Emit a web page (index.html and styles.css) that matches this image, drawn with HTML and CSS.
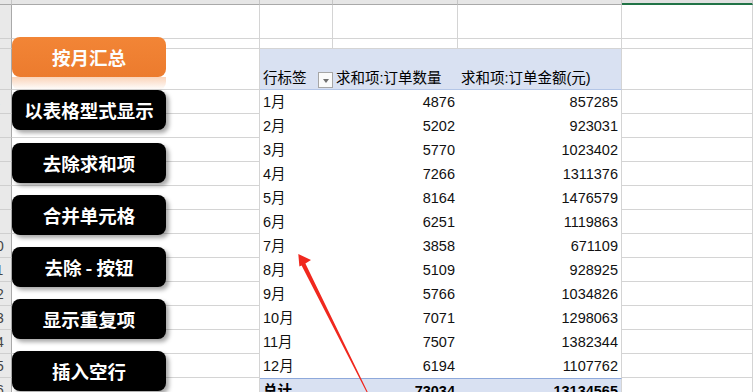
FILE: index.html
```html
<!DOCTYPE html>
<html>
<head>
<meta charset="utf-8">
<link rel="stylesheet" href="styles.css">
</head>
<body>
<div class="sheet">
  <div class="ch"></div><div class="ch"></div><div class="ch"></div><div class="ch"></div><div class="ch"></div><div class="ch sel"></div>

  <div class="rh"><span>1</span></div><div class="c"></div><div class="c"></div><div class="c"></div><div class="c"></div><div class="c"></div>
  <div class="rh"><span>2</span></div><div class="c"></div><div class="c"></div><div class="c"></div><div class="c"></div><div class="c"></div>
  <div class="rh"><span>3</span></div><div class="c"></div>
  <div class="c ph ph-first"><span class="cjk">行标签</span><span class="dd"><i></i></span></div>
  <div class="c ph ph-mid"><span class="cjk">求和项:订单数量</span></div>
  <div class="c ph ph-last"><span class="cjk">求和项:订单金额(元)</span></div>
  <div class="c"></div>

  <div class="rh"><span>4</span></div><div class="c"></div><div class="c pb lab">1月</div><div class="c pb num">4876</div><div class="c pb num last">857285</div><div class="c"></div>
  <div class="rh"><span>5</span></div><div class="c"></div><div class="c pb lab">2月</div><div class="c pb num">5202</div><div class="c pb num last">923031</div><div class="c"></div>
  <div class="rh"><span>6</span></div><div class="c"></div><div class="c pb lab">3月</div><div class="c pb num">5770</div><div class="c pb num last">1023402</div><div class="c"></div>
  <div class="rh"><span>7</span></div><div class="c"></div><div class="c pb lab">4月</div><div class="c pb num">7266</div><div class="c pb num last">1311376</div><div class="c"></div>
  <div class="rh"><span>8</span></div><div class="c"></div><div class="c pb lab">5月</div><div class="c pb num">8164</div><div class="c pb num last">1476579</div><div class="c"></div>
  <div class="rh"><span>9</span></div><div class="c"></div><div class="c pb lab">6月</div><div class="c pb num">6251</div><div class="c pb num last">1119863</div><div class="c"></div>
  <div class="rh"><span>10</span></div><div class="c"></div><div class="c pb lab">7月</div><div class="c pb num">3858</div><div class="c pb num last">671109</div><div class="c"></div>
  <div class="rh"><span>11</span></div><div class="c"></div><div class="c pb lab">8月</div><div class="c pb num">5109</div><div class="c pb num last">928925</div><div class="c"></div>
  <div class="rh"><span>12</span></div><div class="c"></div><div class="c pb lab">9月</div><div class="c pb num">5766</div><div class="c pb num last">1034826</div><div class="c"></div>
  <div class="rh"><span>13</span></div><div class="c"></div><div class="c pb lab">10月</div><div class="c pb num">7071</div><div class="c pb num last">1298063</div><div class="c"></div>
  <div class="rh"><span>14</span></div><div class="c"></div><div class="c pb lab">11月</div><div class="c pb num">7507</div><div class="c pb num last">1382344</div><div class="c"></div>
  <div class="rh"><span>15</span></div><div class="c"></div><div class="c pb lab">12月</div><div class="c pb num">6194</div><div class="c pb num last">1107762</div><div class="c"></div>
  <div class="rh"><span>16</span></div><div class="c"></div><div class="c pt lab">总计</div><div class="c pt num">73034</div><div class="c pt num last">13134565</div><div class="c"></div>

  <div class="btn orange b1">按月汇总</div>
  <div class="btn b2">以表格型式显示</div>
  <div class="btn b3">去除求和项</div>
  <div class="btn b4">合并单元格</div>
  <div class="btn b5">去除 - 按钮</div>
  <div class="btn b6">显示重复项</div>
  <div class="btn b7">插入空行</div>

  <svg class="arrow" width="753" height="392" viewBox="0 0 753 392">
    <polygon points="298.3,254 311,260 305.4,263.6 370.9,398.6 370.1,399 301.6,265.5 299.4,266.6" fill="#f0281e"/>
  </svg>
</div>
</body>
</html>
```

FILE: styles.css
```css
html, body {
  margin: 0;
  padding: 0;
  background: #ffffff;
}
body {
  width: 753px;
  height: 392px;
  overflow: hidden;
  font-family: "Liberation Sans", "Noto Sans CJK SC", sans-serif;
  font-size: 14.5px;
  color: #111;
}
.sheet {
  position: relative;
  display: grid;
  grid-template-columns: 12px 248px 73px 125px 164px 1fr;
  grid-template-rows: 5px 34px 10px 41px repeat(12, 24px) 24px;
  width: 753px;
  height: 392px;
  overflow: hidden;
}
.ch {
  background: #e6e6e6;
  border-right: 1px solid #c6c6c6;
  border-bottom: 1px solid #a9a9a9;
  box-sizing: border-box;
}
.ch.sel {
  background: #e0e0e0;
  border-bottom: 2px solid #217346;
}
.rh {
  background: #e9e9e9;
  border-right: 1px solid #a9a9a9;
  border-bottom: 1px solid #cfcfcf;
  box-sizing: border-box;
  display: flex;
  justify-content: flex-end;
  align-items: center;
  overflow: hidden;
  color: #444;
  font-size: 14px;
}
.rh span {
  flex: 0 0 30px;
  width: 30px;
  text-align: center;
}
.c {
  border-right: 1px solid #d4d4d4;
  border-bottom: 1px solid #d4d4d4;
  box-sizing: border-box;
  white-space: nowrap;
  overflow: hidden;
}
.ph {
  background: #d9e1f2;
  border-right: none;
  border-bottom: 1px solid #b4c6e7;
  display: flex;
  align-items: flex-end;
  padding: 0 3px 1px 3px;
  line-height: 19px;
  color: #000;
}
.ph-first {
  justify-content: space-between;
  padding-right: 0;
}
.ph-last {
  border-right: 1px solid #d4d4d4;
  padding-left: 3px;
}
.dd {
  width: 15px;
  height: 16px;
  box-sizing: border-box;
  border: 1px solid #a6a6a6;
  background: #fbfbfb;
  display: flex;
  align-items: center;
  justify-content: center;
  margin-bottom: 0;
}
.dd i {
  display: block;
  width: 0;
  height: 0;
  border-left: 3.5px solid transparent;
  border-right: 3.5px solid transparent;
  border-top: 4px solid #707070;
  margin-top: 1px;
}
.pb {
  border-right: none;
  border-bottom: none;
  background: #fff;
  line-height: 24px;
  color: #111;
}
.pb.last, .pt.last {
  border-right: 1px solid #d4d4d4;
}
.lab {
  padding-left: 3px;
}
.num {
  text-align: right;
  padding-right: 3px;
}
.pt {
  background: #d9e1f2;
  border-top: 1px solid #8ea9db;
  border-right: none;
  border-bottom: none;
  font-weight: bold;
  line-height: 22px;
  padding-top: 1px;
  color: #000;
}
.btn {
  position: absolute;
  left: 12px;
  width: 154px;
  height: 40px;
  border-radius: 8px;
  background: #000;
  color: #fff;
  font-family: "Noto Sans CJK SC", sans-serif;
  font-weight: 700;
  font-size: 18.5px;
  display: flex;
  align-items: center;
  justify-content: center;
  box-shadow: 3px 3px 4px rgba(0, 0, 0, 0.35);
  letter-spacing: 0;
}
.btn.orange {
  background: linear-gradient(#f28536, #ec7b2e);
  box-shadow: none;
  color: #fdfdfd;
}
.btn.orange::after {
  content: "";
  position: absolute;
  left: 0;
  right: 0;
  top: 40px;
  height: 13px;
  border-radius: 0 0 8px 8px;
  background: linear-gradient(rgba(240, 130, 55, 0.35), rgba(240, 130, 55, 0));
}
.b1 { top: 37px; }
.b2 { top: 90px; }
.b3 { top: 143px; }
.b4 { top: 195px; }
.b5 { top: 247px; }
.b6 { top: 299px; }
.b7 { top: 351px; }
.arrow {
  position: absolute;
  left: 0;
  top: 0;
  pointer-events: none;
}
```
